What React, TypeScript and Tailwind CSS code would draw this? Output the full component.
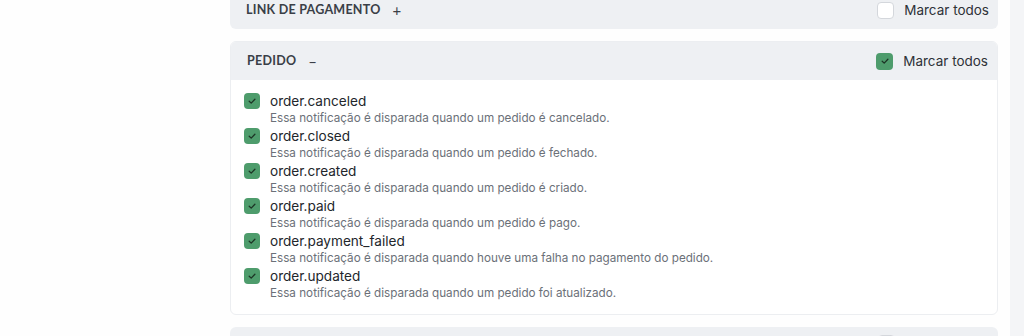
const items = [
  { name: "order.canceled", desc: "Essa notificação é disparada quando um pedido é cancelado." },
  { name: "order.closed", desc: "Essa notificação é disparada quando um pedido é fechado." },
  { name: "order.created", desc: "Essa notificação é disparada quando um pedido é criado." },
  { name: "order.paid", desc: "Essa notificação é disparada quando um pedido é pago." },
  { name: "order.payment_failed", desc: "Essa notificação é disparada quando houve uma falha no pagamento do pedido." },
  { name: "order.updated", desc: "Essa notificação é disparada quando um pedido foi atualizado." },
];

function Check({ checked, size = "w-4 h-4" }: { checked: boolean; size?: string }) {
  if (!checked) {
    return <span className={`${size} shrink-0 rounded-[4px] border border-[#d4d7dc] bg-white`} />;
  }
  return (
    <span className={`${size} shrink-0 rounded-[4px] bg-[#4e9c6c] flex items-center justify-center`}>
      <svg width="10" height="10" viewBox="0 0 10 10" fill="none">
        <path d="M2.2 5.2 L4.2 7.1 L7.9 3.2" stroke="#1d3526" strokeWidth="1.3" strokeLinecap="round" strokeLinejoin="round" />
      </svg>
    </span>
  );
}

function SectionHeader({ title, open, checked }: { title?: string; open: boolean; checked: boolean }) {
  return (
    <div className="h-[38px] bg-[#eef0f3] flex items-center justify-between pl-4 pr-[9px]">
      <div className="flex items-center gap-[12px] font-['Lato',sans-serif] font-bold text-[12.5px] tracking-[0.02em] text-[#3a3f47]">
        {title && <span>{title}</span>}
        {title && <span className="font-normal text-[15px]">{open ? "–" : "+"}</span>}
      </div>
      <label className="flex items-center gap-[10px] font-['Inter',sans-serif] text-[13.5px] text-[#2e3238]">
        <Check checked={checked} size="w-[17px] h-[17px]" />
        {title && "Marcar todos"}
      </label>
    </div>
  );
}

export default function App() {
  return (
    <div className="w-[1024px] h-[336px] overflow-hidden bg-[#fefefe] flex">
      <div className="w-[230px] shrink-0" />
      <div className="w-[768px] shrink-0 flex flex-col gap-3 -mt-[9px]">
        <div className="shrink-0 rounded-md overflow-hidden">
          <SectionHeader title="LINK DE PAGAMENTO" open={false} checked={false} />
        </div>
        <div className="shrink-0 rounded-md overflow-hidden border border-[#eceef1] bg-white">
          <SectionHeader title="PEDIDO" open={true} checked={true} />
          <div className="pt-3 pb-3 pl-[13px] flex flex-col font-['Inter',sans-serif]">
            {items.map((it) => (
              <div key={it.name} className="flex gap-[10px]">
                <div className="pt-[1px]">
                  <Check checked={true} />
                </div>
                <div className="flex flex-col">
                  <span className="text-[13.6px] leading-[18px] text-[#22262b]">{it.name}</span>
                  <span className="text-[11.7px] leading-[17px] text-[#6b7078]">{it.desc}</span>
                </div>
              </div>
            ))}
          </div>
        </div>
        <div className="shrink-0 rounded-md overflow-hidden">
          <div className="h-[38px] bg-[#eef0f3] flex items-start justify-end pt-[8px] pr-[103px]">
            <Check checked={false} size="w-[17px] h-[17px]" />
          </div>
        </div>
      </div>
      <div className="w-3 shrink-0" />
      <div className="flex-1 bg-[#f4f5f7]" />
    </div>
  );
}
